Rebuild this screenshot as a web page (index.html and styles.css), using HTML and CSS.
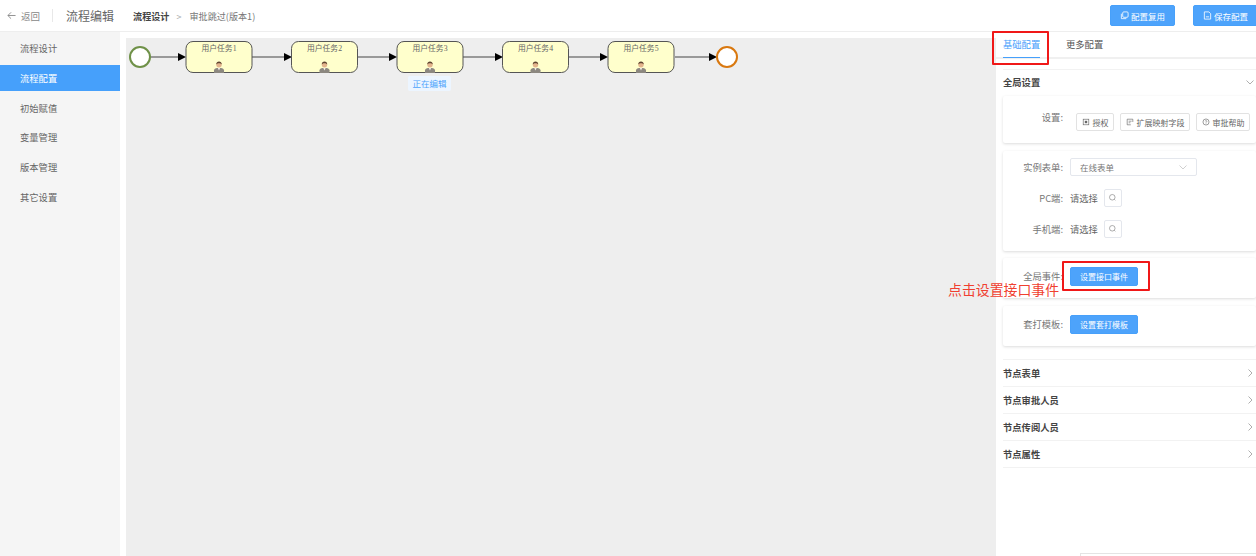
FILE: index.html
```html
<!DOCTYPE html>
<html lang="zh-CN">
<head>
<meta charset="utf-8">
<title>流程编辑</title>
<link rel="stylesheet" href="styles.css">
</head>
<body>
<svg class="defs" width="0" height="0" aria-hidden="true">
  <symbol id="person" viewBox="0 0 11 12">
    <path d="M0.500 12V9.200C0.500 8 2 7.400 3.600 7L7.400 7C9 7.400 10.500 8 10.500 9.200V12Z" fill="#8c8880"/>
    <path d="M4.300 7L5.500 9.500L6.700 7Z" fill="#f4efe6"/>
    <circle cx="5.500" cy="3.700" r="2.700" fill="#e3b48c"/>
    <path d="M2.800 3.600C2.600 1.300 4 0.500 5.500 0.500C7 0.500 8.400 1.300 8.200 3.600C7.600 2.500 6.700 2.200 5.500 2.200C4.300 2.200 3.400 2.500 2.800 3.600Z" fill="#5e4430"/>
  </symbol>
  <symbol id="search" viewBox="0 0 12 12">
    <circle cx="5.700" cy="5.700" r="3.700" fill="none" stroke="#777" stroke-width="0.800"/>
    <path d="M8.400 8.400L9.800 9.800" stroke="#777" stroke-width="0.800"/>
  </symbol>
</svg>

<header class="topbar">
  <div class="back">
    <svg class="back-arrow" viewBox="0 0 10 10"><path d="M9.500 5H1M4.500 1.500L1 5L4.500 8.500" fill="none" stroke="#888" stroke-width="1"/></svg>
    <span>返回</span>
  </div>
  <span class="divider"></span>
  <h1 class="page-title">流程编辑</h1>
  <nav class="crumbs">
    <strong>流程设计</strong>
    <span class="crumb-sep">&gt;</span>
    <span>审批跳过(版本1)</span>
  </nav>
  <div class="top-actions">
    <button class="btn-primary btn-top">
      <svg class="btn-ico" viewBox="0 0 10 10"><rect x="3" y="1" width="6" height="6" rx="1.200" fill="none" stroke="#fff" stroke-width="0.900"/><path d="M1.500 3V8.500H7" fill="none" stroke="#fff" stroke-width="0.900"/></svg>配置复用
    </button>
    <button class="btn-primary btn-top">
      <svg class="btn-ico" viewBox="0 0 10 10"><path d="M1.500 1H6.500L8.500 3V9H1.500ZM3.200 6.500H6.800" fill="none" stroke="#fff" stroke-width="0.900"/></svg>保存配置
    </button>
  </div>
</header>

<div class="workspace">
  <aside class="sidebar">
    <a class="side-item">流程设计</a>
    <a class="side-item active">流程配置</a>
    <a class="side-item">初始赋值</a>
    <a class="side-item">变量管理</a>
    <a class="side-item">版本管理</a>
    <a class="side-item">其它设置</a>
  </aside>

  <main class="canvas">
    <svg class="diagram" width="870" height="518" viewBox="126 38 870 518">
      <g class="flows">
        <path d="M150 57H180M252 57H285M358 57H391M463 57H496M569 57H602M675 57H710"/>
      </g>
      <g class="heads">
        <path d="M178 53L186 57L178 61Z"/><path d="M284 53L292 57L284 61Z"/><path d="M389 53L397 57L389 61Z"/><path d="M495 53L503 57L495 61Z"/><path d="M600 53L608 57L600 61Z"/><path d="M709 53L717 57L709 61Z"/>
      </g>
      <circle class="ev-start" cx="140" cy="57" r="10"/>
      <circle class="ev-end" cx="727" cy="57" r="10"/>
      <g class="task">
        <rect x="186" y="41.500" width="66" height="31" rx="7"/><text x="219" y="51">用户任务1</text><use href="#person" x="213.500" y="61" width="11" height="12"/>
        <rect x="291.500" y="41.500" width="66" height="31" rx="7"/><text x="324.500" y="51">用户任务2</text><use href="#person" x="319" y="61" width="11" height="12"/>
        <rect x="397" y="41.500" width="66" height="31" rx="7"/><text x="430" y="51">用户任务3</text><use href="#person" x="424.500" y="61" width="11" height="12"/>
        <rect x="502.500" y="41.500" width="66" height="31" rx="7"/><text x="535.500" y="51">用户任务4</text><use href="#person" x="530" y="61" width="11" height="12"/>
        <rect x="608" y="41.500" width="66" height="31" rx="7"/><text x="641" y="51">用户任务5</text><use href="#person" x="635.500" y="61" width="11" height="12"/>
      </g>
    </svg>
    <span class="editing-tag">正在编辑</span>
  </main>

  <section class="panel">
    <div class="tabs">
      <span class="tab current">基础配置</span>
      <span class="tab">更多配置</span>
    </div>

    <div class="global-head">
      <span class="sec-title">全局设置</span>
      <svg class="chev" viewBox="0 0 8 8"><path d="M0.500 2.500L4 6L7.500 2.500" fill="none" stroke="#999" stroke-width="0.800"/></svg>
    </div>

    <div class="cards">
      <div class="card card-settings">
        <span class="label label-high">设置:</span>
        <div class="mini-btns">
          <button class="btn-mini btn-w1"><svg class="mini-ico" viewBox="0 0 10 10"><rect x="1.500" y="1.500" width="7" height="7" fill="none" stroke="#666" stroke-width="0.800"/><rect x="3.500" y="3.500" width="3" height="3" fill="#666"/></svg>授权</button>
          <button class="btn-mini btn-w2"><svg class="mini-ico" viewBox="0 0 10 10"><path d="M1.500 1.500H8.500V5M1.500 1.500V8.500H6M3.300 4H7M3.300 6H5.500" fill="none" stroke="#666" stroke-width="0.800"/></svg>扩展映射字段</button>
          <button class="btn-mini btn-w3"><svg class="mini-ico" viewBox="0 0 10 10"><circle cx="5" cy="5" r="3.800" fill="none" stroke="#666" stroke-width="0.800"/><path d="M3.900 4C4 2.900 6.200 2.900 6.100 4.100C6 4.900 5 4.900 5 5.900M5 6.600V7.300" fill="none" stroke="#666" stroke-width="0.700"/></svg>审批帮助</button>
        </div>
      </div>

      <div class="card card-forms">
        <div class="field">
          <span class="label">实例表单:</span>
          <div class="select"><span>在线表单</span><svg class="select-chev" viewBox="0 0 8 8"><path d="M0.500 2.500L4 6L7.500 2.500" fill="none" stroke="#bbb" stroke-width="0.700"/></svg></div>
        </div>
        <div class="field">
          <span class="label">PC端:</span>
          <span class="value">请选择</span>
          <button class="btn-search"><svg class="search-ico"><use href="#search"/></svg></button>
        </div>
        <div class="field">
          <span class="label">手机端:</span>
          <span class="value">请选择</span>
          <button class="btn-search"><svg class="search-ico"><use href="#search"/></svg></button>
        </div>
      </div>

      <div class="card card-action">
        <span class="label">全局事件:</span>
        <button class="btn-primary btn-action">设置接口事件</button>
      </div>

      <div class="card card-action">
        <span class="label">套打模板:</span>
        <button class="btn-primary btn-action">设置套打模板</button>
      </div>
    </div>

    <div class="rows">
      <div class="row"><span class="sec-title">节点表单</span><svg class="chev" viewBox="0 0 8 8"><path d="M2.500 0.500L6 4L2.500 7.500" fill="none" stroke="#999" stroke-width="0.800"/></svg></div>
      <div class="row"><span class="sec-title">节点审批人员</span><svg class="chev" viewBox="0 0 8 8"><path d="M2.500 0.500L6 4L2.500 7.500" fill="none" stroke="#999" stroke-width="0.800"/></svg></div>
      <div class="row"><span class="sec-title">节点传阅人员</span><svg class="chev" viewBox="0 0 8 8"><path d="M2.500 0.500L6 4L2.500 7.500" fill="none" stroke="#999" stroke-width="0.800"/></svg></div>
      <div class="row"><span class="sec-title">节点属性</span><svg class="chev" viewBox="0 0 8 8"><path d="M2.500 0.500L6 4L2.500 7.500" fill="none" stroke="#999" stroke-width="0.800"/></svg></div>
    </div>

    <div class="peek"></div>
  </section>
</div>

<div class="mark mark-tab"></div>
<div class="mark mark-event"></div>
<div class="note">点击设置接口事件</div>
</body>
</html>
```

FILE: styles.css
```css
* { box-sizing: border-box; }
html, body { margin: 0; height: 100%; overflow: hidden; }
body {
  width: 1256px;
  height: 556px;
  position: relative;
  background: #fff;
  color: #555;
  font-family: "Noto Sans CJK SC", "Liberation Sans", sans-serif;
  font-size: 9px;
}
.defs { position: absolute; }
button { font-family: inherit; cursor: pointer; }

/* top bar */
.topbar {
  height: 32px;
  display: flex;
  align-items: center;
  padding-left: 7px;
  border-bottom: 1px solid #eee;
}
.back { display: flex; align-items: center; gap: 5px; color: #888; font-size: 9.500px; }
.back-arrow { width: 9px; height: 9px; }
.divider { width: 1px; height: 13px; background: #e8e8e8; margin-left: 12px; }
.page-title { margin: 0 0 0 13px; font-size: 12px; font-weight: 400; color: #666; line-height: 1; }
.crumbs { display: flex; align-items: center; margin-left: 19px; font-size: 9.100px; color: #777; }
.crumbs strong { color: #444; font-weight: 700; }
.crumb-sep { margin: 0 8px 0 7px; color: #aaa; }
.top-actions { margin-left: auto; margin-right: -2px; display: flex; gap: 18px; }
.btn-primary {
  background: #4da3fb;
  color: #fff;
  border: 1px solid #47a0fa;
  border-radius: 2px;
  display: flex;
  align-items: center;
  justify-content: center;
  padding: 0;
}
.btn-top { width: 65px; height: 21px; font-size: 8.500px; gap: 2px; }
.btn-ico { width: 9px; height: 9px; }

/* main area */
.workspace { display: flex; height: 524px; }
.sidebar {
  width: 119.500px;
  background: #f5f5f5;
  padding-top: 3.300px;
  display: flex;
  flex-direction: column;
  gap: 3.700px;
  flex: none;
}
.side-item {
  height: 26px;
  line-height: 26px;
  padding-left: 20px;
  font-size: 9.300px;
  color: #666;
}
.side-item.active { background: #46a0fb; color: #fff; }

.canvas {
  flex: none;
  width: 870px;
  margin: 6px 0 0 6.500px;
  background: #eee;
  position: relative;
}
.diagram { display: block; }
.flows path { fill: none; stroke: #7d7d7d; stroke-width: 1.400; }
.heads path { fill: #000; }
.ev-start { fill: #fff; stroke: #6f9148; stroke-width: 2; }
.ev-end { fill: #fff; stroke: #d9780f; stroke-width: 2; }
.task rect { fill: #ffffcc; stroke: #555; stroke-width: 1; }
.task text {
  font-family: "Liberation Serif", "Noto Sans CJK SC", serif;
  font-size: 7.800px;
  fill: #666;
  text-anchor: middle;
}
.editing-tag {
  position: absolute;
  left: 282px;
  top: 38px;
  width: 43px;
  height: 15px;
  line-height: 15px;
  text-align: center;
  background: #ecf5ff;
  color: #4da3fb;
  font-size: 8.500px;
  border-radius: 2px;
}

/* right panel */
.panel { flex: none; width: 260px; position: relative; padding-left: 7px; }
.tabs {
  margin-left: -7px;
  height: 27px;
  padding-left: 7px;
  display: flex;
  gap: 26px;
  border-bottom: 2px solid #f0f0f0;
}
.tab { height: 26px; line-height: 25px; font-size: 9.300px; color: #555; white-space: nowrap; }
.tab.current { color: #46a0fb; border-bottom: 1.500px solid #46a0fb; width: 37px; }
.global-head {
  margin-top: 10px;
  height: 27px;
  padding: 0 2px 2px 0;
  border-top: 1px solid #f2f2f2;
  display: flex;
  align-items: center;
  justify-content: space-between;
}
.sec-title { font-size: 9.300px; font-weight: 700; color: #444; }
.chev { width: 8px; height: 8px; }
.cards { display: flex; flex-direction: column; gap: 7.600px; }
.card {
  background: #fff;
  border-radius: 2px;
  box-shadow: 0 1px 3px rgba(0, 0, 0, 0.14);
}
.label { width: 60px; text-align: right; color: #777; font-size: 9.300px; flex: none; line-height: 18px; }
.card-settings { height: 47px; display: flex; align-items: flex-start; padding-top: 12px; }
.mini-btns { display: flex; gap: 6px; margin-left: 13px; padding-top: 5px; }
.btn-mini {
  height: 18px;
  padding: 0;
  display: flex;
  align-items: center;
  justify-content: center;
  gap: 3px;
  background: #fff;
  border: 1px solid #e2e2e2;
  border-radius: 2px;
  color: #666;
  font-size: 8px;
  white-space: nowrap;
}
.btn-w1 { width: 38px; }
.btn-w2 { width: 70px; }
.btn-w3 { width: 54px; }
.mini-ico { width: 8px; height: 8px; }
.card-forms { height: 100px; padding-top: 7.400px; display: flex; flex-direction: column; gap: 13px; }
.field { display: flex; align-items: center; height: 18px; }
.select {
  width: 127px;
  height: 18px;
  margin-left: 7px;
  padding: 0 9px;
  border: 1px solid #e4e7ed;
  border-radius: 2px;
  display: flex;
  align-items: center;
  justify-content: space-between;
  font-size: 8.500px;
  color: #777;
}
.select-chev { width: 8px; height: 8px; }
.value { margin-left: 7px; color: #666; font-size: 9.300px; }
.btn-search {
  width: 18px;
  height: 18px;
  margin-left: 6px;
  padding: 0;
  background: #fff;
  border: 1px solid #e4e7ed;
  border-radius: 2px;
  display: flex;
  align-items: center;
  justify-content: center;
}
.search-ico { width: 9px; height: 9px; }
.card-action { height: 40px; display: flex; align-items: flex-start; padding-top: 8.800px; }
.btn-action { width: 68px; height: 19px; margin-left: 7px; font-size: 8px; }
.rows { margin-top: 13.500px; }
.row {
  height: 27px;
  border-top: 1px solid #f2f2f2;
  display: flex;
  align-items: center;
  justify-content: space-between;
  padding-right: 2px;
}
.row:last-child { border-bottom: 1px solid #f2f2f2; height: 28px; }
.peek {
  position: absolute;
  left: 84px;
  right: 0;
  bottom: 0;
  height: 3px;
  background: #fff;
  border-top: 1px solid #e4e4e4;
  border-left: 1px solid #e4e4e4;
}

/* annotations drawn over the screenshot */
.mark { position: absolute; border: 2px solid #f01818; border-radius: 1px; }
.mark-tab { left: 992px; top: 31px; width: 57px; height: 34px; }
.mark-event { left: 1062px; top: 261px; width: 88px; height: 30px; }
.note { position: absolute; left: 948px; top: 279px; font-size: 13.900px; line-height: 20px; color: #f04030; white-space: nowrap; }
```
